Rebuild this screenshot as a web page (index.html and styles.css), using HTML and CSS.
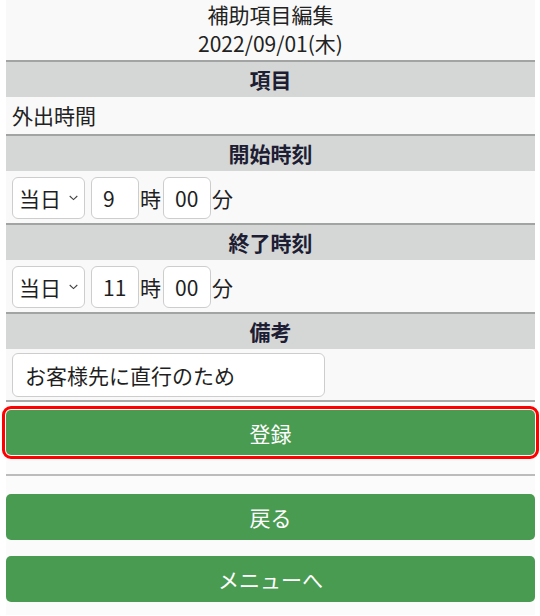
FILE: index.html
```html
<!DOCTYPE html>
<html lang="ja">
<head>
<meta charset="utf-8">
<title>補助項目編集</title>
<link rel="stylesheet" href="styles.css">
</head>
<body>
<div class="page">
  <div class="title">
    <div>補助項目編集</div>
    <div>2022/09/01(木)</div>
  </div>

  <div class="band">項目</div>
  <div class="row-text">外出時間</div>

  <div class="band">開始時刻</div>
  <div class="row-input">
    <select class="sel"><option>当日</option></select>
    <input class="num" type="text" value="9">
    <span class="unit">時</span>
    <input class="num" type="text" value="00">
    <span class="unit">分</span>
  </div>

  <div class="band">終了時刻</div>
  <div class="row-input">
    <select class="sel"><option>当日</option></select>
    <input class="num" type="text" value="11">
    <span class="unit">時</span>
    <input class="num" type="text" value="00">
    <span class="unit">分</span>
  </div>

  <div class="band">備考</div>
  <div class="row-remark">
    <input class="remark" type="text" value="お客様先に直行のため">
  </div>

  <div class="actions">
    <button class="btn btn-focus" type="button">登録</button>
    <hr class="sep">
    <button class="btn" type="button">戻る</button>
    <button class="btn btn-last" type="button">メニューへ</button>
  </div>
</div>
</body>
</html>
```

FILE: styles.css
```css
* { box-sizing: border-box; }

html, body {
  margin: 0;
  padding: 0;
  background: #ffffff;
}

body {
  font-family: "Noto Sans CJK JP", "Noto Sans", sans-serif;
  font-size: 21px;
  color: #1f1f1f;
}

.page {
  width: 529px;
  margin-left: 6px;
  background: #f9f9f9;
}

.title {
  text-align: center;
  line-height: 29px;
  height: 60px;
  padding-top: 0;
  color: #222;
}

.band {
  border-top: 2px solid #a2a4a4;
  background: #d5d7d7;
  height: 37px;
  line-height: 34px;
  text-align: center;
  font-weight: bold;
  color: #1d1d33;
}

.row-text {
  height: 37px;
  line-height: 37px;
  padding-left: 6px;
  color: #222;
}

.row-input {
  display: flex;
  align-items: center;
  height: 52px;
  padding: 6px 6px 4px;
}

.sel {
  appearance: none;
  -webkit-appearance: none;
  width: 73px;
  height: 42px;
  margin: 0 6px 0 0;
  padding: 0 0 0 6px;
  border: 1px solid #cdcdcd;
  border-radius: 6px;
  background-color: #fff;
  background-image: url("data:image/svg+xml,%3Csvg xmlns='http://www.w3.org/2000/svg' width='9' height='6' viewBox='0 0 9 6'%3E%3Cpath d='M0.7 1 L4.5 4.6 L8.3 1' fill='none' stroke='%23444' stroke-width='1.1'/%3E%3C/svg%3E");
  background-repeat: no-repeat;
  background-position: 56px 17px;
  font-family: inherit;
  font-size: 21px;
  color: #1f1f1f;
}

.num {
  width: 48px;
  height: 42px;
  margin: 0;
  padding: 0 0 0 11px;
  border: 1px solid #cdcdcd;
  border-radius: 6px;
  background: #fff;
  font-family: inherit;
  font-size: 21px;
  color: #1f1f1f;
}

.unit {
  margin: 0 2px 0 1px;
  line-height: 1;
}

.row-remark {
  height: 53px;
  padding: 4px 6px 3px;
  border-bottom: 2px solid #a9a9a9;
}

.remark {
  width: 313px;
  height: 44px;
  margin: 0;
  padding: 0 0 0 12px;
  border: 1px solid #cdcdcd;
  border-radius: 6px;
  background: #fff;
  font-family: inherit;
  font-size: 21px;
  color: #1f1f1f;
}

.actions {
  display: flex;
  flex-direction: column;
  padding: 8px 0 13px;
  background: #fbfbfb;
}

.btn {
  display: block;
  width: 100%;
  height: 46px;
  margin: 0;
  padding: 0;
  border: none;
  border-radius: 5px;
  background: #4a9b52;
  color: #ffffff;
  font-family: inherit;
  font-size: 21px;
}

.btn-focus {
  height: 45px;
  outline: 3px solid #ff0000;
  outline-offset: 1px;
}

.sep {
  width: 100%;
  margin: 19px 0 18px;
  border: none;
  border-top: 2px solid #bcbcbc;
  height: 0;
}

.btn-last {
  margin-top: 16px;
}
```
